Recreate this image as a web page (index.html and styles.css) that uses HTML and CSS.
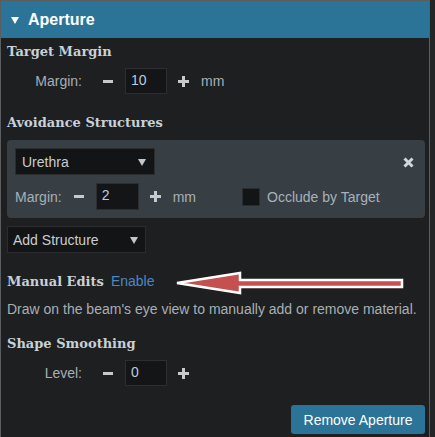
FILE: index.html
```html
<!DOCTYPE html>
<html>
<head>
<meta charset="utf-8">
<link rel="stylesheet" href="styles.css">
</head>
<body>
<div class="panel">
  <div class="header">
    <svg class="caret" width="8" height="7" viewBox="0 0 8 7"><polygon points="0,0 8,0 4,7" fill="#fff"/></svg>
    <span>Aperture</span>
  </div>
  <div class="content">
    <div class="heading h-first">Target Margin</div>
    <div class="row row-first">
      <span class="field-label">Margin:</span>
      <span class="minus"></span>
      <span class="num">10</span>
      <span class="plus"><i></i><b></b></span>
      <span class="unit">mm</span>
    </div>

    <div class="heading h-avoid">Avoidance Structures</div>
    <div class="card">
      <div class="card-top">
        <div class="select sel-structure"><span>Urethra</span><span class="arrow"></span></div>
        <svg class="close" width="11" height="11" viewBox="0 0 11 11"><path d="M1.5 1.5 L9.5 9.5 M9.5 1.5 L1.5 9.5" stroke="#d3d7da" stroke-width="3" stroke-linecap="butt"/></svg>
      </div>
      <div class="row card-row">
        <span class="card-label">Margin:</span>
        <span class="minus"></span>
        <span class="num">2</span>
        <span class="plus"><i></i><b></b></span>
        <span class="unit">mm</span>
        <span class="check"></span>
        <span class="check-label">Occlude by Target</span>
      </div>
    </div>
    <div class="select sel-add"><span>Add Structure</span><span class="arrow"></span></div>

    <div class="heading h-manual">
      Manual Edits<a class="enable">Enable</a>
      <svg class="callout" width="240" height="32" viewBox="0 0 240 32">
        <polygon points="7,16 70,6 70,13 232,13 232,20 70,20 70,26" transform="translate(1.5,1.5)" fill="#4a1818" opacity="0.8"/>
        <polygon points="7,16 70,6 70,13 232,13 232,20 70,20 70,26" fill="#c4504f" stroke="#fff" stroke-width="2.5" stroke-linejoin="miter"/>
      </svg>
    </div>
    <div class="desc">Draw on the beam's eye view to manually add or remove material.</div>

    <div class="heading h-shape">Shape Smoothing</div>
    <div class="row row-level">
      <span class="field-label">Level:</span>
      <span class="minus"></span>
      <span class="num">0</span>
      <span class="plus"><i></i><b></b></span>
    </div>

    <div class="actions">
      <button class="btn">Remove Aperture</button>
    </div>
  </div>
</div>
</body>
</html>
```

FILE: styles.css
```css
body {
  margin: 0;
  background: #242527;
  font-family: "Liberation Sans", Arial, sans-serif;
  font-size: 14px;
  color: #a7afb5;
}

.panel {
  width: 428px;
  height: 436px;
  border: 1px solid #5b5e61;
  border-bottom: none;
  background: #1e1f21;
  overflow: hidden;
}

.header {
  height: 37px;
  background: #2c7398;
  display: flex;
  align-items: center;
  padding-left: 10px;
  color: #fff;
  font-weight: bold;
  font-size: 16px;
}

.caret {
  margin-right: 9px;
  margin-top: 1px;
}

.content {
  padding: 0 4px 0 6px;
}

.heading {
  font-family: "DejaVu Serif", Georgia, serif;
  font-weight: bold;
  font-size: 13px;
  line-height: 20px;
  color: #c7d1d9;
}

.h-first { margin-top: 4px; }
.h-avoid { margin-top: 19px; }
.h-manual { margin-top: 18px; position: relative; }
.h-shape { margin-top: 16px; }

.row {
  display: flex;
  align-items: center;
  height: 26px;
}

.row-first { margin-top: 6px; }
.row-level { margin-top: 6px; }

.field-label {
  width: 75px;
  text-align: right;
  margin-right: 21px;
}

.minus {
  width: 10px;
  height: 3px;
  background: #c6cacd;
  margin-right: 12px;
}

.num {
  box-sizing: border-box;
  width: 42px;
  height: 26px;
  background: #141517;
  border: 1px solid #2c2e31;
  color: #b9cde0;
  padding: 3px 0 0 5px;
  line-height: 17px;
}

.plus {
  position: relative;
  width: 11px;
  height: 11px;
  margin-left: 11px;
  margin-right: 12px;
}

.plus i {
  position: absolute;
  left: 0;
  top: 4px;
  width: 11px;
  height: 3px;
  background: #c6cacd;
}

.plus b {
  position: absolute;
  left: 4px;
  top: 0;
  width: 3px;
  height: 11px;
  background: #c6cacd;
}

.card {
  margin-top: 7px;
  background: #373f45;
  border-radius: 4px;
  padding: 8px 11px 8px 8px;
}

.card-top {
  display: flex;
  align-items: center;
  justify-content: space-between;
}

.close { margin-top: 1px; }

.card-row {
  margin-top: 8px;
  height: 27px;
}

.card-row .num { height: 27px; width: 43px; }

.card-label { margin-right: 12px; }

.check {
  box-sizing: border-box;
  width: 18px;
  height: 18px;
  background: #131416;
  border: 1px solid #2b2e31;
  margin-left: 46px;
  margin-right: 7px;
}

.check-label { color: #a6b2ba; }

.select {
  box-sizing: border-box;
  display: flex;
  align-items: center;
  justify-content: space-between;
  height: 27px;
  background: #131415;
  border: 1px solid #2a2c2e;
  color: #c9cdd0;
}

.sel-structure {
  width: 140px;
  padding: 0 8px 0 6px;
}

.sel-add {
  width: 139px;
  margin-top: 8px;
  padding: 0 7px 0 5px;
}

.arrow {
  width: 0;
  height: 0;
  border-left: 4px solid transparent;
  border-right: 4px solid transparent;
  border-top: 7px solid #c3c7ca;
  margin-top: 1px;
}

.enable {
  font-family: "Liberation Sans", Arial, sans-serif;
  font-weight: normal;
  font-size: 14px;
  color: #4a88c2;
  margin-left: 7px;
}

.callout {
  position: absolute;
  left: 163px;
  top: -4px;
}

.desc {
  margin-top: 8px;
  line-height: 18px;
}

.actions {
  display: flex;
  justify-content: flex-end;
  margin-top: 19px;
}

.btn {
  width: 134px;
  height: 29px;
  background: #2c7398;
  border: none;
  border-radius: 3px;
  color: #fff;
  font-family: "Liberation Sans", Arial, sans-serif;
  font-size: 14px;
  padding: 0;
}
```
